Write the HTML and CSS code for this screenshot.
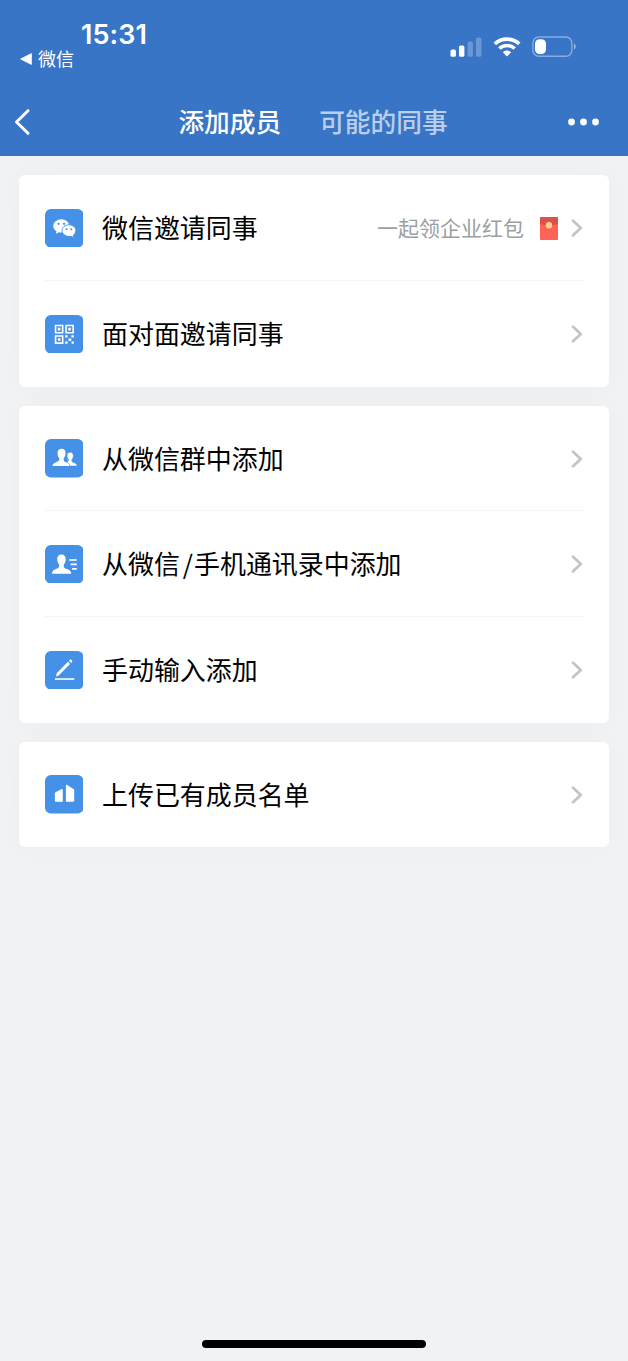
FILE: index.html
```html
<!DOCTYPE html>
<html lang="zh-CN">
<head>
<meta charset="utf-8">
<meta name="viewport" content="width=device-width, initial-scale=1">
<title>添加成员</title>
<link rel="stylesheet" href="styles.css">
</head>
<body>
<div class="screen">
  <header class="header">
    <div class="status">
      <div class="status-left">
        <div class="time">15:31</div>
        <div class="return-app">
          <svg width="12" height="12" viewBox="0 0 12 12"><path d="M0.6 6 11.4.6v10.8z" fill="#fff" stroke="#fff" stroke-width=".8" stroke-linejoin="round"/></svg>
          <span>微信</span>
        </div>
      </div>
      <div class="status-right">
        <svg width="32" height="20" viewBox="0 0 32 20" fill="#fff"><rect x="0.5" y="12.5" width="5.4" height="7.3" rx="1.6"/><rect x="9" y="8.5" width="5.4" height="11.3" rx="1.6"/><g opacity=".25"><rect x="17.5" y="4.5" width="5.4" height="15.3" rx="1.6"/><rect x="26" y="0.4" width="5.4" height="19.4" rx="1.6"/></g></svg>
        <svg class="wifi" width="28" height="20" viewBox="0 0 28 20" fill="none" stroke="#fff"><path d="M1.800 6.900C8.500.5 19.500.5 26.200 6.900" stroke-width="3.700"/><path d="M6.300 11.500c4.300-4.100 11.100-4.100 15.400 0" stroke-width="3.600"/><path d="M9.800 15.200c2.300-2.200 6.100-2.200 8.400 0L14 19.500z" fill="#fff" stroke="none"/></svg>
        <svg class="battery" width="45" height="22" viewBox="0 0 45 22"><rect x=".9" y="1" width="39" height="19.200" rx="6" fill="none" stroke="#fff" stroke-opacity=".4" stroke-width="1.400"/><rect x="3" y="3.200" width="11" height="14.800" rx="4.500" fill="#fff"/><path d="M42 7.800c2.200.8 2.200 4.900 0 5.700z" fill="#fff" fill-opacity=".5"/></svg>
      </div>
    </div>
    <nav class="nav">
      <svg class="back" width="17" height="28" viewBox="0 0 17 28"><path d="M14 2.700 2.500 14 14 25.300" fill="none" stroke="#fff" stroke-width="3" stroke-linecap="round" stroke-linejoin="round"/></svg>
      <div class="tabs"><span class="tab active">添加成员</span><span class="tab">可能的同事</span></div>
      <svg class="more" width="32" height="8" viewBox="0 0 32 8" fill="#fff"><circle cx="3.500" cy="4" r="3.400"/><circle cx="15.500" cy="4" r="3.400"/><circle cx="27.500" cy="4" r="3.400"/></svg>
    </nav>
  </header>

  <main class="content">
    <section class="card">
      <div class="row">
        <svg class="icon" viewBox="0 0 39 39"><rect width="39" height="39" rx="6"/><path fill="#fff" d="M16.500 10.500c-4.500 0-8.100 3-8.100 6.700 0 2.200 1.200 4 3.100 5.200l-.3 2.600 2.900-1.400c.8.2 1.600.3 2.400.3 4.500 0 8.100-3 8.100-6.700s-3.600-6.700-8.100-6.700z"/><path fill="#fff" stroke="#4591e8" stroke-width="1" d="M24.300 16c3.900 0 7 2.600 7 5.900 0 1.900-1 3.500-2.600 4.600l.3 2.600-2.600-1.500c-.7.2-1.400.2-2.100.2-3.900 0-7-2.600-7-5.900s3.100-5.900 7-5.900z"/><circle cx="13.700" cy="15" r="1.150"/><circle cx="19.300" cy="15" r="1.150"/><circle cx="21.900" cy="20.400" r="1"/><circle cx="26.600" cy="20.400" r="1"/></svg>
        <span class="label">微信邀请同事</span>
        <span class="hint">一起领企业红包</span>
        <svg class="packet" width="18" height="23" viewBox="0 0 18 23"><rect width="18" height="23" rx="1" fill="#ff6257"/><path d="M0 1Q0 0 1 0h16q1 0 1 1v6Q9 10 0 7z" fill="#df5148"/><circle cx="9" cy="8.200" r="3.200" fill="#ffd58d"/></svg>
        <svg class="arrow" viewBox="0 0 12 18"><path d="m2 1.700 7.800 7.300L2 16.300"/></svg>
      </div>
      <div class="row">
        <svg class="icon" viewBox="0 0 39 39"><rect width="39" height="39" rx="6"/><g fill="none" stroke="#fff" stroke-width="1.600"><path d="M10.700 10.700h7.200v7.200h-7.200zM21.300 10.700h7.200v7.200h-7.200zM10.700 21.300h7.200v7.200h-7.200z"/></g><path fill="#fff" d="M13 13h2.600v2.600H13zM23.600 13h2.600v2.600h-2.600zM13 23.600h2.600v2.600H13zM20.400 20.600h2.500v2.300h-2.500zM26.700 20.600h2.500v2.300h-2.500zM23.800 23.800h2.800v2.600h-2.800zM20.400 26.800h2.500v2.400h-2.500zM26.900 26.800h2.300v2.400h-2.300z"/></svg>
        <span class="label">面对面邀请同事</span>
        <svg class="arrow" viewBox="0 0 12 18"><path d="m2 1.700 7.800 7.300L2 16.300"/></svg>
      </div>
    </section>

    <section class="card">
      <div class="row">
        <svg class="icon" viewBox="0 0 39 39"><rect width="39" height="39" rx="6"/><path fill="#fff" stroke="#4591e8" stroke-width=".6" d="M25.600 13.500c2.200 0 3.300 1.700 3.100 3.900-.1 1.700-.7 2.800-1.500 3.600 0 1.900.3 2.300 2.300 3.100 1.900.7 3 1.500 3 3.300h-7.200c-.3-2-1.600-3-3.400-4.100 1.500-.7 1.900-1.300 1.800-2.400-.9-.9-1.300-2.100-1.400-3.500-.2-2.200 1.100-3.900 3.300-3.900z"/><path fill="#fff" d="M16.800 10c2.800 0 4.200 2 4 4.700-.1 2.200-.8 3.700-1.900 4.800-.2 2.600.4 3.300 2.500 4.100 2.300.9 3.300 1.900 3.400 3.800H7.500c.2-1.900 1.300-2.900 3.700-3.800 2.600-1 3.400-1.700 3.300-4.100-1.100-1.100-1.700-2.600-1.800-4.800-.2-2.700 1.300-4.700 4.100-4.700z"/></svg>
        <span class="label">从微信群中添加</span>
        <svg class="arrow" viewBox="0 0 12 18"><path d="m2 1.700 7.800 7.300L2 16.300"/></svg>
      </div>
      <div class="row">
        <svg class="icon" viewBox="0 0 39 39"><rect width="39" height="39" rx="6"/><path fill="#fff" d="M16.700 9.700c3 0 4.500 2.100 4.300 5-.1 2.300-.8 3.800-2 5-.2 3 .5 3.700 3.200 4.700s4.300 2 4.400 4.700H7c.2-2.700 1.500-3.700 4-4.700 2.800-1.100 3.500-1.900 3.400-4.700-1.200-1.200-1.900-2.700-2-5-.2-2.900 1.300-5 4.300-5z"/><path fill="none" stroke="#fff" stroke-width="1.700" d="M24.500 15.200h7.700M26 19.700h6.200M27.500 24.200h4.700"/></svg>
        <span class="label">从微信<span class="slash">/</span>手机通讯录中添加</span>
        <svg class="arrow" viewBox="0 0 12 18"><path d="m2 1.700 7.800 7.300L2 16.300"/></svg>
      </div>
      <div class="row">
        <svg class="icon" viewBox="0 0 39 39"><rect width="39" height="39" rx="6"/><path fill="#fff" d="m11.100 25.900.8-3.300L23.200 11l2.200 2.200-11.500 11.500zM24.200 10l1-1c1.100-1.100 3.200 1 2.200 2.100l-1 1z"/><path stroke="#fff" stroke-width="1.600" d="M10 28.400h19.700"/></svg>
        <span class="label">手动输入添加</span>
        <svg class="arrow" viewBox="0 0 12 18"><path d="m2 1.700 7.800 7.300L2 16.300"/></svg>
      </div>
    </section>

    <section class="card">
      <div class="row">
        <svg class="icon" viewBox="0 0 39 39"><rect width="39" height="39" rx="6"/><path fill="#fff" d="M10 18.600q0-.7.600-1l6.400-3.300q1-.5 1 .6V27h-7q-1 0-1-1zM21.200 10.400q0-1 .9-.4l6.800 4.300q.7.400.7 1.200V26q0 1-1 1h-7.400z"/></svg>
        <span class="label">上传已有成员名单</span>
        <svg class="arrow" viewBox="0 0 12 18"><path d="m2 1.700 7.800 7.300L2 16.300"/></svg>
      </div>
    </section>
  </main>
  <div class="home-bar"></div>
</div>
</body>
</html>
```
FILE: styles.css
```css
* { box-sizing: border-box; }

body {
  margin: 0;
  background: #f1f2f4;
  font-family: "Noto Sans CJK SC", sans-serif;
  color: #000;
}

svg { display: block; flex: none; }

.screen {
  height: 1361px;
  display: flex;
  flex-direction: column;
}

.header {
  height: 156px;
  background: #3875c6;
  color: #fff;
}

.status {
  height: 88px;
  display: flex;
  justify-content: space-between;
  padding: 20px 51px 0 20px;
}

.time {
  padding-left: 61px;
  font: 600 27px/29px Inter, sans-serif;
  letter-spacing: 0.1px;
}

.return-app {
  display: flex;
  align-items: center;
  gap: 6px;
  font-size: 18px;
  line-height: 18px;
}

.return-app span { padding-bottom: 1px; }

.status-right {
  display: flex;
  align-items: flex-start;
  padding-top: 17px;
}

.wifi { margin-left: 11px; }
.battery { margin-left: 11px; margin-top: -1px; }

.nav {
  height: 68px;
  display: grid;
  grid-template-columns: 164px 1fr 164px;
  align-items: center;
}

.back { margin-left: 14px; }
.more { justify-self: end; margin-right: 28px; }

.tabs {
  display: flex;
  justify-content: center;
  gap: 38px;
  padding: 0 2px 3px 0;
  font-size: 25.700px;
  line-height: 36px;
  white-space: nowrap;
  font-weight: 500;
}

.tab { opacity: 0.65; }
.tab.active { opacity: 1; }

.content {
  flex: 1;
  display: flex;
  flex-direction: column;
  gap: 19px;
  padding: 19.300px 19px 0;
}

.card {
  padding: 0 25px;
  background: #fff;
  border-radius: 6px;
  box-shadow: 0 0 30px rgba(0, 0, 0, 0.025);
}

.row {
  height: 105.700px;
  display: flex;
  align-items: center;
}

.row:not(:last-child) { box-shadow: inset 0 -1px #f4f5f6; }

.icon {
  width: 38.500px;
  height: 38.500px;
  margin: 0 19px 0 0.500px;
  fill: #4591e8;
}

.label {
  flex: 1;
  padding-bottom: 2px;
  font-size: 25.950px;
  line-height: 38px;
  white-space: nowrap;
}

.slash { padding: 0 1px 0 3px; }

.hint {
  padding-bottom: 2px;
  color: #9b9fa4;
  font-size: 21px;
  line-height: 30px;
}

.packet { margin: 0 13px 0 16px; }

.arrow {
  width: 12px;
  height: 18px;
  margin-right: 1px;
  fill: none;
  stroke: #c3c4c7;
  stroke-width: 2.700;
  stroke-linecap: round;
  stroke-linejoin: round;
}

.home-bar {
  width: 224px;
  height: 8px;
  margin: 0 auto 13px;
  border-radius: 4px;
  background: #000;
}
```
